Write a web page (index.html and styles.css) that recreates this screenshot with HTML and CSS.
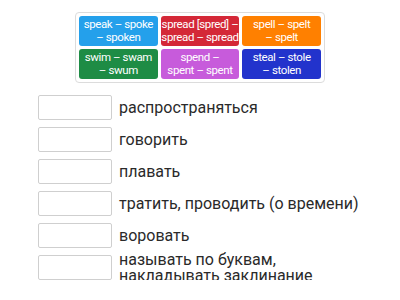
FILE: index.html
```html
<!DOCTYPE html>
<html lang="ru">
<head>
    <meta charset="UTF-8">
    <meta name="viewport" content="width=device-width, initial-scale=1.0">
    <title>Сопоставление</title>
    <link rel="stylesheet" href="styles.css">
</head>
<body>
    <div class="bank">
        <div class="tile blue">speak – spoke<br>– spoken</div>
        <div class="tile red">spread [spred] –<br>spread – spread</div>
        <div class="tile orange">spell – spelt<br>– spelt</div>
        <div class="tile green">swim – swam<br>– swum</div>
        <div class="tile purple">spend –<br>spent – spent</div>
        <div class="tile navy">steal – stole<br>– stolen</div>
    </div>

    <div class="list">
        <div class="row">
            <div class="slot"></div>
            <div class="label">распространяться</div>
        </div>
        <div class="row">
            <div class="slot"></div>
            <div class="label">говорить</div>
        </div>
        <div class="row">
            <div class="slot"></div>
            <div class="label">плавать</div>
        </div>
        <div class="row">
            <div class="slot"></div>
            <div class="label">тратить, проводить (о времени)</div>
        </div>
        <div class="row">
            <div class="slot"></div>
            <div class="label">воровать</div>
        </div>
        <div class="row">
            <div class="slot"></div>
            <div class="label">называть по буквам,<br>накладывать заклинание</div>
        </div>
    </div>
</body>
</html>
```

FILE: styles.css
```css
body {
    margin: 0;
    padding: 12px 0 0;
    background-color: white;
    font-family: Roboto, "Liberation Sans", sans-serif;
}

.bank {
    width: 250px;
    margin: 0 auto;
    box-sizing: border-box;
    padding: 3px;
    border: 1px solid #dcdcdc;
    border-radius: 4px;
    display: grid;
    grid-template-columns: repeat(3, 1fr);
    grid-auto-rows: 30px;
    gap: 3px;
}

.tile {
    display: flex;
    align-items: center;
    justify-content: center;
    text-align: center;
    white-space: nowrap;
    border-radius: 3px;
    color: white;
    font-family: Roboto, sans-serif;
    font-size: 11.5px;
    letter-spacing: -0.4px;
    line-height: 13px;
}

.blue { background: #24a0eb; }
.red { background: #d42837; }
.orange { background: #ff8000; }
.green { background: #1e8c45; }
.purple { background: #c75bdb; }
.navy { background: #2233cc; }

.list {
    display: flex;
    flex-direction: column;
    gap: 7px;
    margin: 12px 0 0 38px;
}

.row {
    display: flex;
    align-items: center;
    gap: 7px;
    height: 25px;
}

.slot {
    flex: none;
    width: 74px;
    height: 25px;
    box-sizing: border-box;
    border: 1px solid #cfcfcf;
    border-radius: 2px;
    background: white;
}

.label {
    color: #2a2a2a;
    font-size: 16px;
    line-height: 16px;
    white-space: nowrap;
}
```
